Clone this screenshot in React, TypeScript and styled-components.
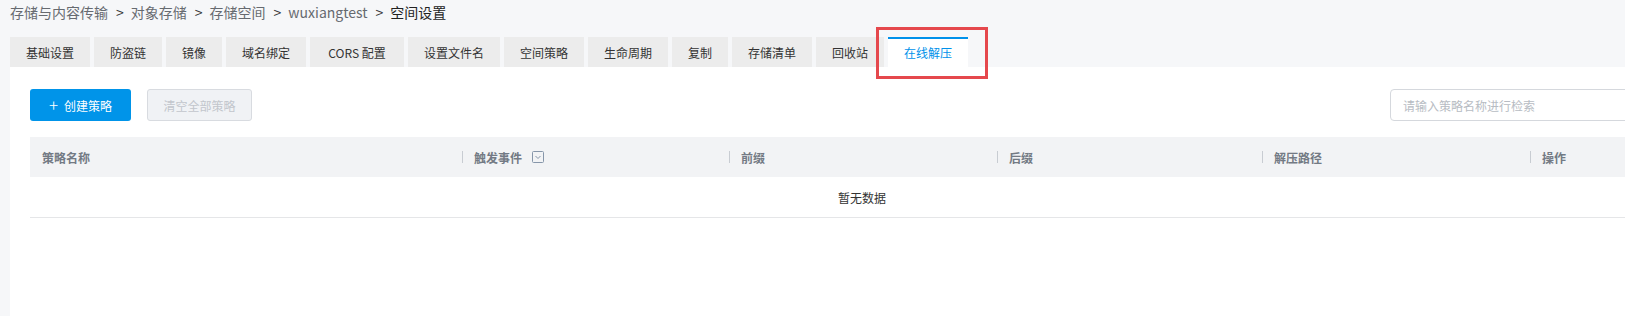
import styled, { createGlobalStyle } from "styled-components";

const GlobalStyle = createGlobalStyle`
  html, body {
    margin: 0;
    padding: 0;
    background: #f6f7f9;
    overflow: hidden;
  }
  * {
    box-sizing: border-box;
  }
  body {
    font-family: "Noto Sans CJK SC", "Liberation Sans", sans-serif;
  }
`;

const crumbs = ["存储与内容传输", "对象存储", "存储空间", "wuxiangtest"];

const tabs = [
  { label: "基础设置", width: 80 },
  { label: "防盗链", width: 68 },
  { label: "镜像", width: 56 },
  { label: "域名绑定", width: 80 },
  { label: "CORS 配置", width: 94 },
  { label: "设置文件名", width: 92 },
  { label: "空间策略", width: 80 },
  { label: "生命周期", width: 80 },
  { label: "复制", width: 56 },
  { label: "存储清单", width: 80 },
  { label: "回收站", width: 68 },
  { label: "在线解压", width: 80 },
];

const columns = [
  { title: "策略名称", width: "432px" },
  { title: "触发事件", width: "267px", filter: true },
  { title: "前缀", width: "268px" },
  { title: "后缀", width: "265px" },
  { title: "解压路径", width: "268px" },
  { title: "操作", width: "1fr" },
];

const FilterIcon = () => (
  <svg width="12" height="12" viewBox="0 0 12 12" fill="none">
    <rect x="0.5" y="0.5" width="11" height="11" rx="1" stroke="#8796aa" />
    <path d="M3.5 5l2.5 2.5L8.5 5" stroke="#8796aa" strokeWidth="1" />
  </svg>
);

const App = () => {
  return (
    <>
      <GlobalStyle />
      <Page>
        <Breadcrumb>
          {crumbs.map((c) => (
            <span key={c}>
              <CrumbLink>{c}</CrumbLink>
              <CrumbSep>&gt;</CrumbSep>
            </span>
          ))}
          <CrumbCurrent>空间设置</CrumbCurrent>
        </Breadcrumb>

        <TabBar>
          {tabs.map((t) => (
            <Tab key={t.label} $width={t.width} $active={t.label === "在线解压"}>
              {t.label}
              {t.label === "在线解压" && <Highlight />}
            </Tab>
          ))}
        </TabBar>

        <Panel>
          <Toolbar>
            <ButtonGroup>
              <PrimaryButton>
                <Plus>+</Plus>
                创建策略
              </PrimaryButton>
              <DisabledButton>清空全部策略</DisabledButton>
            </ButtonGroup>
            <SearchInput placeholder="请输入策略名称进行检索" />
          </Toolbar>

          <Table>
            <HeaderRow $cols={columns.map((c) => c.width).join(" ")}>
              {columns.map((c, i) => (
                <HeaderCell key={c.title} $divider={i > 0}>
                  {c.title}
                  {c.filter && (
                    <FilterBox>
                      <FilterIcon />
                    </FilterBox>
                  )}
                </HeaderCell>
              ))}
            </HeaderRow>
            <EmptyRow>暂无数据</EmptyRow>
          </Table>
        </Panel>
      </Page>
    </>
  );
};

export default App;

const Page = styled.div`
  width: 1730px;
  height: 316px;
  padding-left: 10px;
  display: flex;
  flex-direction: column;
`;

const Breadcrumb = styled.div`
  height: 24px;
  display: flex;
  align-items: center;
  font-size: 14px;
  line-height: 24px;
  margin-bottom: 13px;
`;

const CrumbLink = styled.span`
  color: #666a70;
`;

const CrumbSep = styled.span`
  color: #333;
  margin: 0 7px 0 8px;
`;

const CrumbCurrent = styled.span`
  color: #222;
`;

const TabBar = styled.div`
  display: flex;
  gap: 4px;
  height: 30px;
`;

const Tab = styled.div<{ $active?: boolean; $width: number }>`
  position: relative;
  width: ${(p) => p.$width}px;
  height: 30px;
  display: flex;
  align-items: center;
  justify-content: center;
  white-space: nowrap;
  font-size: 12px;
  line-height: 16px;
  color: ${(p) => (p.$active ? "#0091ea" : "#333")};
  background: ${(p) => (p.$active ? "#fff" : "#ececec")};
  border-top: 2px solid ${(p) => (p.$active ? "#0091ea" : "#ececec")};
`;

const Highlight = styled.span`
  position: absolute;
  left: -12px;
  right: -20px;
  top: -12px;
  bottom: -12px;
  border: 3px solid #e5484d;
  pointer-events: none;
`;

const Panel = styled.div`
  flex: 1;
  width: 1704px;
  background: #fff;
  padding: 22px 20px;
`;

const Toolbar = styled.div`
  display: flex;
  align-items: center;
  justify-content: space-between;
  height: 32px;
  margin-bottom: 16px;
`;

const ButtonGroup = styled.div`
  display: flex;
  gap: 16px;
`;

const PrimaryButton = styled.button`
  height: 32px;
  width: 101px;
  border: none;
  border-radius: 3px;
  background: #0094e9;
  color: #fff;
  font-family: inherit;
  font-size: 12px;
  display: flex;
  align-items: center;
  justify-content: center;
  gap: 6px;
  padding: 0;
`;

const Plus = styled.span`
  font-size: 17px;
  font-weight: 300;
  line-height: 1;
  margin-top: -2px;
`;

const DisabledButton = styled.button`
  height: 32px;
  width: 105px;
  border: 1px solid #d8dbe0;
  border-radius: 3px;
  background: #f0f2f5;
  color: #c2c6cc;
  font-family: inherit;
  font-size: 12px;
  padding: 0;
`;

const SearchInput = styled.input`
  width: 304px;
  height: 32px;
  border: 1px solid #d5d8dd;
  border-radius: 4px;
  padding: 0 12px;
  font-family: inherit;
  font-size: 12px;
  outline: none;
  &::placeholder {
    color: #b7bcc3;
  }
`;

const Table = styled.div`
  width: 1664px;
`;

const HeaderRow = styled.div<{ $cols: string }>`
  display: grid;
  grid-template-columns: ${(p) => p.$cols};
  height: 40px;
  background: #f2f3f5;
`;

const HeaderCell = styled.div<{ $divider?: boolean }>`
  position: relative;
  display: flex;
  align-items: center;
  padding-left: 12px;
  font-size: 12px;
  font-weight: 600;
  color: #737a84;

  &::before {
    content: "";
    display: ${(p) => (p.$divider ? "block" : "none")};
    position: absolute;
    left: 0;
    top: 14px;
    width: 1px;
    height: 12px;
    background: #c8ccd2;
  }
`;

const FilterBox = styled.span`
  display: flex;
  margin-left: 10px;
`;

const EmptyRow = styled.div`
  height: 41px;
  display: flex;
  align-items: center;
  justify-content: center;
  font-size: 12px;
  color: #333;
  border-bottom: 1px solid #e5e6e8;
`;
